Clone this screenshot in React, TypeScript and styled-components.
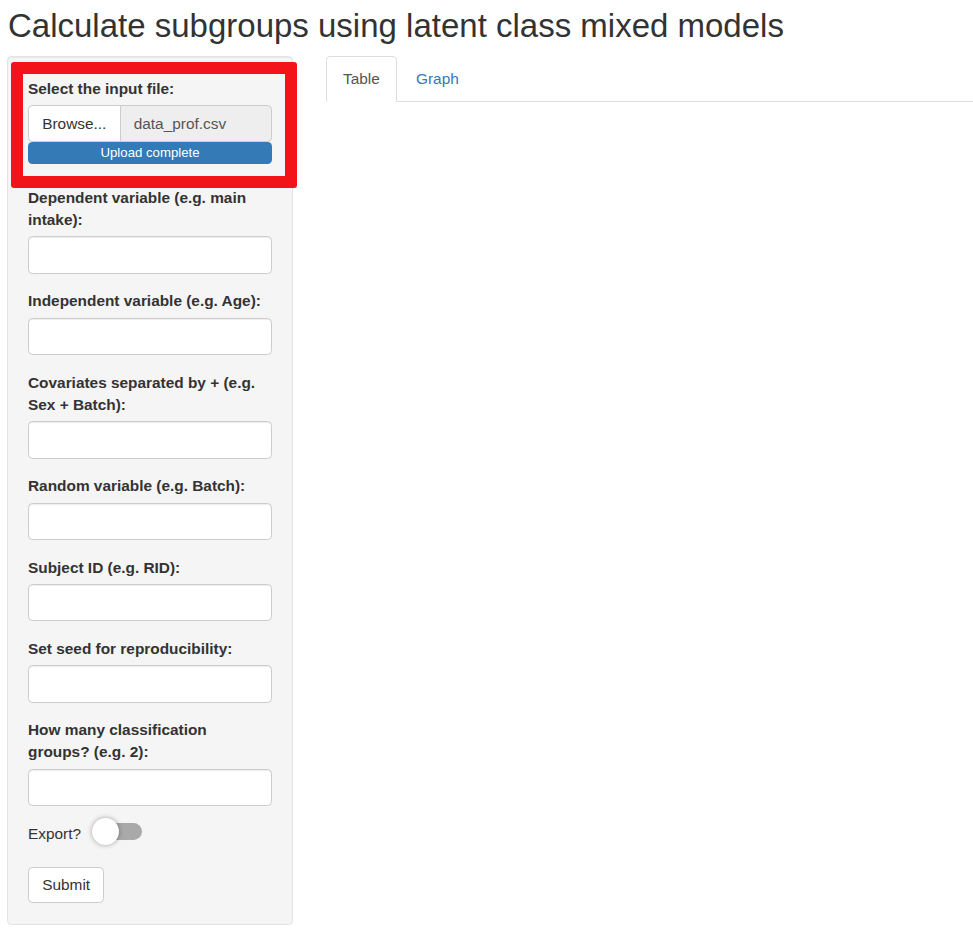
import React from 'react'
import styled, { createGlobalStyle } from 'styled-components'

const GlobalStyle = createGlobalStyle`
  *, *::before, *::after { box-sizing: border-box; }
  html, body { margin: 0; padding: 0; background: #fff; }
  body {
    font-family: "Liberation Sans", Arial, Helvetica, sans-serif;
    font-size: 15.4px;
    line-height: 22px;
    color: #333;
  }
`

const Title = styled.h2`
  margin: 8px 0 11.7px 8px;
  font-size: 33px;
  line-height: 36.3px;
  font-weight: 500;
  color: #333;
`

const Layout = styled.div`
  display: flex;
  align-items: flex-start;
`

const Well = styled.form`
  position: relative;
  width: 286px;
  margin-left: 7px;
  padding: 21px 20px;
  background: #f5f5f5;
  border: 1px solid #e3e3e3;
  border-radius: 4.4px;
  box-shadow: inset 0 1px 1px rgba(0, 0, 0, 0.05);
`

// red highlight drawn over the file input
const Highlight = styled.div`
  position: absolute;
  left: 3px;
  top: 5px;
  width: 286px;
  height: 126px;
  border: 12px solid #f31419;
  border-radius: 3px;
  pointer-events: none;
`

const FormGroup = styled.div<{ $gap?: number }>`
  margin-bottom: ${p => p.$gap ?? 16.5}px;
`

const Label = styled.label`
  display: block;
  max-width: 240px;
  margin-bottom: 5.5px;
  font-weight: bold;
`

const TextInput = styled.input`
  display: block;
  width: 100%;
  height: 37.4px;
  padding: 6.6px 13.2px;
  font: inherit;
  color: #555;
  background: #fff;
  border: 1px solid #ccc;
  border-radius: 4.4px;
  box-shadow: inset 0 1px 1px rgba(0, 0, 0, 0.075);
  outline: none;
`

const FileRow = styled.div`
  display: flex;
  height: 37px;
`

const BrowseButton = styled.span`
  display: flex;
  align-items: center;
  padding: 0 13.2px;
  background: #fff;
  border: 1px solid #ccc;
  border-radius: 4.4px 0 0 4.4px;
  color: #333;
  white-space: nowrap;
`

const FileName = styled.div`
  flex: 1;
  display: flex;
  align-items: center;
  margin-left: -1px;
  padding: 0 13.2px;
  background: #eee;
  border: 1px solid #ccc;
  border-radius: 0 4.4px 4.4px 0;
  color: #555;
`

const Progress = styled.div`
  height: 22px;
  background: #337ab7;
  border-radius: 4.4px;
  color: #fff;
  font-size: 13.2px;
  line-height: 22px;
  text-align: center;
`

const ExportRow = styled.div`
  display: flex;
  align-items: center;
  height: 22px;
  margin-bottom: 22.5px;
`

const Switch = styled.span`
  position: relative;
  align-self: flex-start;
  width: 50px;
  height: 27px;
  margin: -5px 0 0 11px;
`

const Track = styled.span`
  position: absolute;
  left: 10px;
  top: 5px;
  width: 40px;
  height: 17px;
  border-radius: 9px;
  background: #a9a9a9;
`

const Knob = styled.span`
  position: absolute;
  left: 0;
  top: 0;
  width: 27px;
  height: 27px;
  border-radius: 50%;
  background: #fff;
  box-shadow: 0 0 5px rgba(0, 0, 0, 0.35);
`

const SubmitButton = styled.button`
  display: block;
  height: 36px;
  padding: 0 13.2px;
  font: inherit;
  color: #333;
  background: #fff;
  border: 1px solid #ccc;
  border-radius: 4.4px;
`

const Main = styled.div`
  flex: 1;
  margin-left: 33px;
`

const Tabs = styled.ul`
  display: flex;
  margin: 0;
  padding: 0;
  list-style: none;
  border-bottom: 1px solid #ddd;
`

const Tab = styled.li<{ $active?: boolean }>`
  margin: 0 2.2px -1px 0;
  padding: 11px 16px;
  border: 1px solid ${p => (p.$active ? '#ddd' : 'transparent')};
  border-bottom-color: ${p => (p.$active ? '#fff' : 'transparent')};
  border-radius: 4.4px 4.4px 0 0;
  background: ${p => (p.$active ? '#fff' : 'transparent')};
  color: ${p => (p.$active ? '#555' : '#337ab7')};
`

const fields = [
  'Dependent variable (e.g. main intake):',
  'Independent variable (e.g. Age):',
  'Covariates separated by + (e.g. Sex + Batch):',
  'Random variable (e.g. Batch):',
  'Subject ID (e.g. RID):',
  'Set seed for reproducibility:',
  'How many classification groups? (e.g. 2):',
]

export default function App() {
  return (
    <>
      <GlobalStyle />
      <Title>Calculate subgroups using latent class mixed models</Title>
      <Layout>
        <Well onSubmit={e => e.preventDefault()}>
          <FormGroup $gap={22.5}>
            <Label>Select the input file:</Label>
            <FileRow>
              <BrowseButton>Browse...</BrowseButton>
              <FileName>data_prof.csv</FileName>
            </FileRow>
            <Progress>Upload complete</Progress>
          </FormGroup>
          {fields.map(label => (
            <FormGroup key={label}>
              <Label>{label}</Label>
              <TextInput type="text" />
            </FormGroup>
          ))}
          <ExportRow>
            Export?
            <Switch>
              <Track />
              <Knob />
            </Switch>
          </ExportRow>
          <SubmitButton type="submit">Submit</SubmitButton>
          <Highlight />
        </Well>
        <Main>
          <Tabs>
            <Tab $active>Table</Tab>
            <Tab>Graph</Tab>
          </Tabs>
        </Main>
      </Layout>
    </>
  )
}
